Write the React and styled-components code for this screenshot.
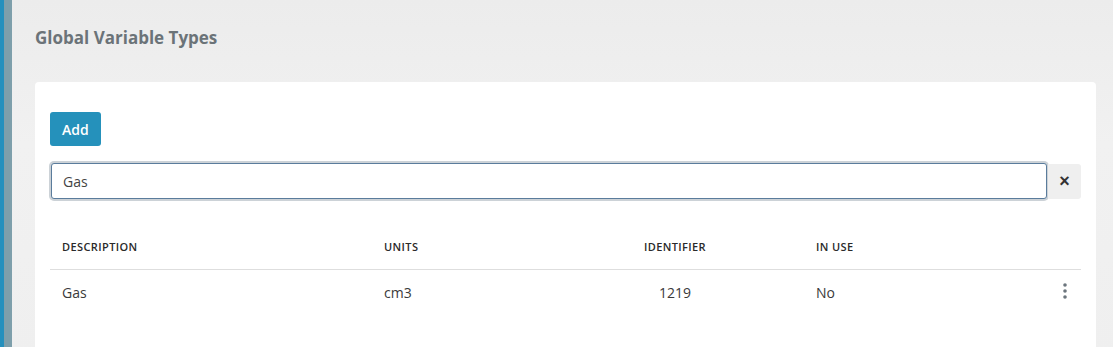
import React from "react"
import styled, { createGlobalStyle } from "styled-components"

const GlobalStyle = createGlobalStyle`
  html, body {
    margin: 0;
    padding: 0;
    background: #efefef;
    font-family: "Open Sans", "Lato", sans-serif;
    color: #333;
  }
`

const Page = styled.div`
  display: flex;
  min-height: 347px;
  background: linear-gradient(180deg, #ececec 0%, #f1f1f1 40%, #efefef 100%);
`

const SideEdge = styled.div`
  width: 12px;
  flex-shrink: 0;
  border-left: 4px solid #2590bd;
  background: #7e9fab;
  box-sizing: border-box;
`

const Main = styled.main`
  flex: 1;
  padding: 28px 17px 0 23px;
`

const Title = styled.h2`
  margin: 0 0 34px;
  font-size: 17px;
  line-height: 20px;
  font-weight: 700;
  color: #6b7378;
`

const Card = styled.section`
  background: #fff;
  border-radius: 4px 4px 0 0;
  padding: 30px 15px 40px;
`

const AddButton = styled.button`
  display: block;
  height: 34px;
  padding: 0 12px;
  border: none;
  border-radius: 3px;
  background: #2591bb;
  color: #fff;
  font-family: inherit;
  font-size: 14px;
  font-weight: 600;
  cursor: pointer;
`

const SearchRow = styled.div`
  display: flex;
  align-items: center;
  margin-top: 15px;
`

const SearchInput = styled.input`
  flex: 1;
  height: 36px;
  box-sizing: border-box;
  padding: 0 11px;
  border: 1px solid #5a7c9c;
  border-radius: 3px;
  box-shadow: 0 0 0 2px #ccd2d7;
  font-family: inherit;
  font-size: 14px;
  color: #444;
  outline: none;
  margin: 2px 1px 2px 1px;
`

const ClearButton = styled.button`
  width: 33px;
  height: 35px;
  border: none;
  border-radius: 0 3px 3px 0;
  background: #efefef;
  color: #333;
  font-size: 18px;
  font-weight: 700;
  line-height: 1;
  padding: 0;
  cursor: pointer;
`

const Table = styled.table`
  width: 100%;
  margin-top: 22px;
  border-collapse: collapse;
  table-layout: fixed;
`

const Th = styled.th`
  width: ${(p) => p.$w || "auto"};
  padding: 16px 12px 14px;
  text-align: ${(p) => p.$align || "left"};
  font-size: 11px;
  line-height: 16px;
  font-weight: 600;
  letter-spacing: 0.4px;
  color: #2a2a2a;
  border-bottom: 1px solid #dedede;
`

const Td = styled.td`
  padding: 13px 12px 17px;
  text-align: ${(p) => p.$align || "left"};
  font-size: 14px;
  line-height: 18px;
  color: #3a3a3a;
`

const MenuButton = styled.button`
  border: none;
  background: none;
  padding: 0 2px;
  cursor: pointer;
  display: inline-flex;
`

const Kebab = () => (
  <svg width="4" height="16" viewBox="0 0 4 16">
    <circle cx="2" cy="2" r="1.8" fill="#6c757d" />
    <circle cx="2" cy="8" r="1.8" fill="#6c757d" />
    <circle cx="2" cy="14" r="1.8" fill="#6c757d" />
  </svg>
)

const rows = [{ description: "Gas", units: "cm3", identifier: 1219, inUse: "No" }]

export default function App() {
  return (
    <>
      <GlobalStyle />
      <Page>
        <SideEdge />
        <Main>
          <Title>Global Variable Types</Title>
          <Card>
            <AddButton>Add</AddButton>
            <SearchRow>
              <SearchInput defaultValue="Gas" />
              <ClearButton aria-label="Clear">×</ClearButton>
            </SearchRow>
            <Table>
              <thead>
                <tr>
                  <Th $w="298px">DESCRIPTION</Th>
                  <Th $w="150px">UNITS</Th>
                  <Th $w="234px" $align="center">IDENTIFIER</Th>
                  <Th>IN USE</Th>
                  <Th $w="20px" />
                </tr>
              </thead>
              <tbody>
                {rows.map((r) => (
                  <tr key={r.identifier}>
                    <Td>{r.description}</Td>
                    <Td>{r.units}</Td>
                    <Td $align="center">{r.identifier}</Td>
                    <Td>{r.inUse}</Td>
                    <Td $align="right">
                      <MenuButton aria-label="Actions">
                        <Kebab />
                      </MenuButton>
                    </Td>
                  </tr>
                ))}
              </tbody>
            </Table>
          </Card>
        </Main>
      </Page>
    </>
  )
}
